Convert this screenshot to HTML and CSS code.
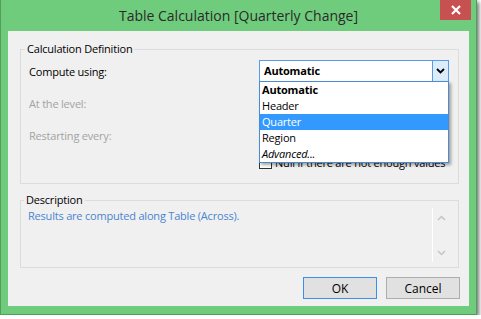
FILE: index.html
```html
<!DOCTYPE html>
<html lang="en">
<head>
  <meta charset="UTF-8">
  <title>Table Calculation</title>
  <link rel="stylesheet" href="styles.css">
</head>
<body>

<div class="window">
  <div class="titlebar">
    <span></span>
    <span class="title">Table Calculation [Quarterly Change]</span>
    <button class="close">
      <svg width="10" height="10" viewBox="0 0 10 10">
        <path d="M1 1 L9 9 M9 1 L1 9" stroke="#ffffff" stroke-width="2.2" fill="none"/>
      </svg>
    </button>
  </div>

  <div class="content">
    <fieldset class="group calc">
      <legend>Calculation Definition</legend>

      <div class="row">
        <label>Compute using:</label>
        <div class="combo">
          <div class="combo-box">
            <span class="combo-value">Automatic</span>
            <span class="combo-arrow">
              <svg width="9" height="6" viewBox="0 0 9 6">
                <path d="M1 1 L4.5 4.5 L8 1" stroke="#000000" stroke-width="1.8" fill="none"/>
              </svg>
            </span>
          </div>
          <ul class="list">
            <li class="bold">Automatic</li>
            <li>Header</li>
            <li class="selected">Quarter</li>
            <li>Region</li>
            <li class="italic">Advanced...</li>
          </ul>
        </div>
      </div>

      <div class="row disabled">
        <label>At the level:</label>
        <div class="combo-box off"></div>
      </div>

      <div class="row disabled">
        <label>Restarting every:</label>
        <div class="combo-box off"></div>
      </div>

      <div class="check-row">
        <span class="checkbox"></span>
        <span>Null if there are not enough values</span>
      </div>
    </fieldset>

    <fieldset class="group desc">
      <legend>Description</legend>
      <div class="desc-body">
        <p class="desc-text">Results are computed along Table (Across).</p>
        <div class="scroll">
          <svg width="9" height="6" viewBox="0 0 9 6">
            <path d="M1 5 L4.5 1.5 L8 5" stroke="#c4c4c4" stroke-width="1.5" fill="none"/>
          </svg>
          <svg width="9" height="6" viewBox="0 0 9 6">
            <path d="M1 1 L4.5 4.5 L8 1" stroke="#c4c4c4" stroke-width="1.5" fill="none"/>
          </svg>
        </div>
      </div>
    </fieldset>

    <div class="buttons">
      <button class="btn default">OK</button>
      <button class="btn">Cancel</button>
    </div>
  </div>
</div>

</body>
</html>
```

FILE: styles.css
```css
body {
  margin: 0;
  background-color: #ffffff;
  font-family: "Open Sans", "Noto Sans", sans-serif;
  font-size: 11px;
  letter-spacing: -0.2px;
}

.window {
  width: 477px;
  height: 315px;
  box-sizing: border-box;
  background-color: #70cc7d;
  border: 1px solid #4f9e5c;
  border-top: none;
  box-shadow: 2px 2px 4px rgba(0, 0, 0, 0.55);
  display: flex;
  flex-direction: column;
}

.titlebar {
  height: 31px;
  display: grid;
  grid-template-columns: 1fr auto 1fr;
  align-items: start;
}

.title {
  font-size: 14px;
  letter-spacing: 0;
  line-height: 31px;
  color: #2a2a2a;
}

.close {
  justify-self: end;
  width: 31px;
  height: 20px;
  margin-right: 5px;
  border: none;
  padding: 0;
  background-color: #c75050;
  display: flex;
  align-items: center;
  justify-content: center;
}

.content {
  height: 275px;
  margin: 0 7px;
  background-color: #f0f0f0;
  display: flex;
  flex-direction: column;
}

.group {
  border: 1px solid #dcdcdc;
  margin: 0 10px 0 12px;
  min-width: 0;
}

.group legend {
  padding: 0 2px;
  margin-left: -4px;
  line-height: 16px;
  color: #000000;
}

.calc {
  margin-top: 10px;
  padding: 3px 8px 14px 8px;
}

.row {
  height: 22px;
  display: flex;
  align-items: center;
  margin-bottom: 10px;
}

.row label {
  width: 230px;
}

.row.disabled label {
  color: #a3a3a3;
}

.combo {
  position: relative;
}

.combo-box {
  width: 190px;
  height: 22px;
  box-sizing: border-box;
  border: 1px solid #569de5;
  background-color: #ffffff;
  display: flex;
}

.combo-box.off {
  border-color: #d9d9d9;
  background-color: #f0f0f0;
}

.combo-value {
  flex: 1;
  padding-left: 4px;
  font-weight: bold;
  line-height: 20px;
}

.combo-arrow {
  width: 15px;
  background-color: #dcecfc;
  border-left: 1px solid #569de5;
  display: flex;
  align-items: center;
  justify-content: center;
}

.list {
  position: absolute;
  top: 21px;
  left: 0;
  width: 190px;
  box-sizing: border-box;
  margin: 0;
  padding: 0;
  list-style: none;
  background-color: #ffffff;
  border: 1px solid #4a8ccf;
  box-shadow: 2px 2px 3px rgba(0, 0, 0, 0.35);
  z-index: 2;
}

.list li {
  height: 16px;
  line-height: 16px;
  padding-left: 2px;
  color: #000000;
}

.list li.bold {
  font-weight: bold;
}

.list li.italic {
  font-style: italic;
}

.list li.selected {
  background-color: #3399ff;
  color: #ffffff;
}

.check-row {
  height: 13px;
  margin-top: 1px;
  padding-left: 230px;
  display: flex;
  align-items: center;
  gap: 3px;
  line-height: 13px;
  white-space: nowrap;
}

.checkbox {
  flex: none;
  width: 13px;
  height: 13px;
  box-sizing: border-box;
  border: 1px solid #333333;
  background-color: #ffffff;
}

.desc {
  margin-top: 8px;
  padding: 0 8px 5px 7px;
}

.desc-body {
  height: 54px;
  display: flex;
}

.desc-text {
  flex: 1;
  margin: 0;
  line-height: 16px;
  color: #4a84d2;
}

.scroll {
  width: 17px;
  border-left: 1px solid #ffffff;
  display: flex;
  flex-direction: column;
  align-items: center;
  justify-content: space-between;
  padding: 7px 0 6px;
}

.buttons {
  margin-top: 9px;
  margin-right: 9px;
  display: flex;
  justify-content: flex-end;
  gap: 9px;
}

.btn {
  width: 74px;
  height: 22px;
  border: 1px solid #adadad;
  background-color: #e1e1e1;
  font-family: "Open Sans", "Noto Sans", sans-serif;
  font-size: 12px;
  color: #000000;
  padding: 0;
}

.btn.default {
  border-color: #3c8fe8;
}
```
